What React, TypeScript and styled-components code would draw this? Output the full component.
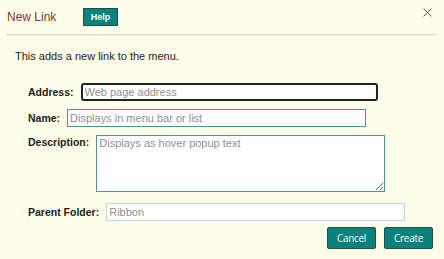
import React from "react";
import styled, { createGlobalStyle } from "styled-components";

const GlobalStyle = createGlobalStyle`
  html, body {
    margin: 0;
    padding: 0;
    background: #fefde9;
  }
  body {
    font-family: "Liberation Sans", Arial, sans-serif;
  }
`;

const Dialog = styled.div`
  width: 444px;
  height: 259px;
  box-sizing: border-box;
  background: #fefde9;
  display: flex;
  flex-direction: column;
`;

const Header = styled.div`
  display: flex;
  align-items: center;
  height: 18px;
  padding: 8px 7px 0 7px;
`;

const Title = styled.div`
  font-size: 12px;
  line-height: 14px;
  color: #8a2f2f;
  width: 76px;
`;

const HelpButton = styled.button`
  width: 35px;
  height: 18px;
  padding: 0;
  background: #0a827b;
  border: 1px solid #1d4f4b;
  color: #fff;
  font-family: "Liberation Sans", Arial, sans-serif;
  font-weight: bold;
  font-size: 9px;
`;

const Close = styled.div`
  margin-left: auto;
  align-self: flex-start;
  width: 9px;
  height: 9px;
  margin-right: 5px;
  svg {
    display: block;
  }
`;

const Divider = styled.div`
  height: 1px;
  margin: 8px 7px 0 7px;
  background: #dedcd0;
  box-shadow: 0 1px 0 #efede0;
`;

const Intro = styled.p`
  margin: 15px 0 0 15px;
  font-size: 11px;
  line-height: 13px;
  color: #222;
`;

const Form = styled.div`
  display: flex;
  flex-direction: column;
  padding-left: 28px;
  margin-top: 20px;
`;

const Row = styled.div<{ $top?: number; $alignTop?: boolean }>`
  display: flex;
  align-items: ${({ $alignTop }) => ($alignTop ? "flex-start" : "center")};
  gap: 7px;
  margin-top: ${({ $top }) => $top ?? 0}px;
`;

const Label = styled.label<{ $padTop?: number }>`
  font-size: 10.5px;
  font-weight: bold;
  color: #1c1c1c;
  padding-top: ${({ $padTop }) => $padTop ?? 0}px;
`;

const TextInput = styled.input<{ $w: number; $focused?: boolean; $muted?: boolean }>`
  box-sizing: border-box;
  width: ${({ $w }) => $w}px;
  height: 18px;
  margin: 0;
  padding: 0 2px;
  font-family: "Liberation Sans", Arial, sans-serif;
  font-size: 11px;
  color: ${({ $muted }) => ($muted ? "#8f8f8f" : "#222")};
  background: #fff;
  border: ${({ $focused, $muted }) =>
    $focused ? "2px solid #222" : $muted ? "1px solid #b9d8cd" : "1px solid #4a9796"};
  border-radius: ${({ $focused }) => ($focused ? "3px" : "0")};
  outline: none;
  &::placeholder {
    color: #8f8f8f;
  }
`;

const TextArea = styled.textarea`
  box-sizing: border-box;
  width: 289px;
  height: 57px;
  margin: 0;
  padding: 1px 2px;
  font-family: "Liberation Sans", Arial, sans-serif;
  font-size: 11px;
  background: #fff;
  border: 1px solid #4a9796;
  outline: none;
  &::placeholder {
    color: #8f8f8f;
  }
`;

const Actions = styled.div`
  display: flex;
  justify-content: flex-end;
  gap: 8px;
  margin-top: 6px;
  padding-right: 11px;
`;

const ActionButton = styled.button`
  width: 49px;
  height: 22px;
  padding: 0;
  background: #0a827b;
  border: 1px solid #1d4f4b;
  border-radius: 2px;
  color: #fff;
  font-family: "Open Sans", "Noto Sans", sans-serif;
  font-size: 10px;
  letter-spacing: -0.3px;
`;

export default function App() {
  return (
    <>
      <GlobalStyle />
      <Dialog>
        <Header>
          <Title>New Link</Title>
          <HelpButton>Help</HelpButton>
          <Close>
            <svg width="9" height="9" viewBox="0 0 9 9">
              <path d="M0.5 0.5 L8.5 8.5 M8.5 0.5 L0.5 8.5" stroke="#555" strokeWidth="1" />
            </svg>
          </Close>
        </Header>
        <Divider />
        <Intro>This adds a new link to the menu.</Intro>
        <Form>
          <Row>
            <Label>Address:</Label>
            <TextInput $w={297} $focused placeholder="Web page address" />
          </Row>
          <Row $top={8}>
            <Label>Name:</Label>
            <TextInput $w={299} placeholder="Displays in menu bar or list" />
          </Row>
          <Row $top={8} $alignTop>
            <Label $padTop={1}>Description:</Label>
            <TextArea placeholder="Displays as hover popup text" />
          </Row>
          <Row $top={11}>
            <Label>Parent Folder:</Label>
            <TextInput $w={299} $muted readOnly value="Ribbon" />
          </Row>
        </Form>
        <Actions>
          <ActionButton>Cancel</ActionButton>
          <ActionButton>Create</ActionButton>
        </Actions>
      </Dialog>
    </>
  );
}
